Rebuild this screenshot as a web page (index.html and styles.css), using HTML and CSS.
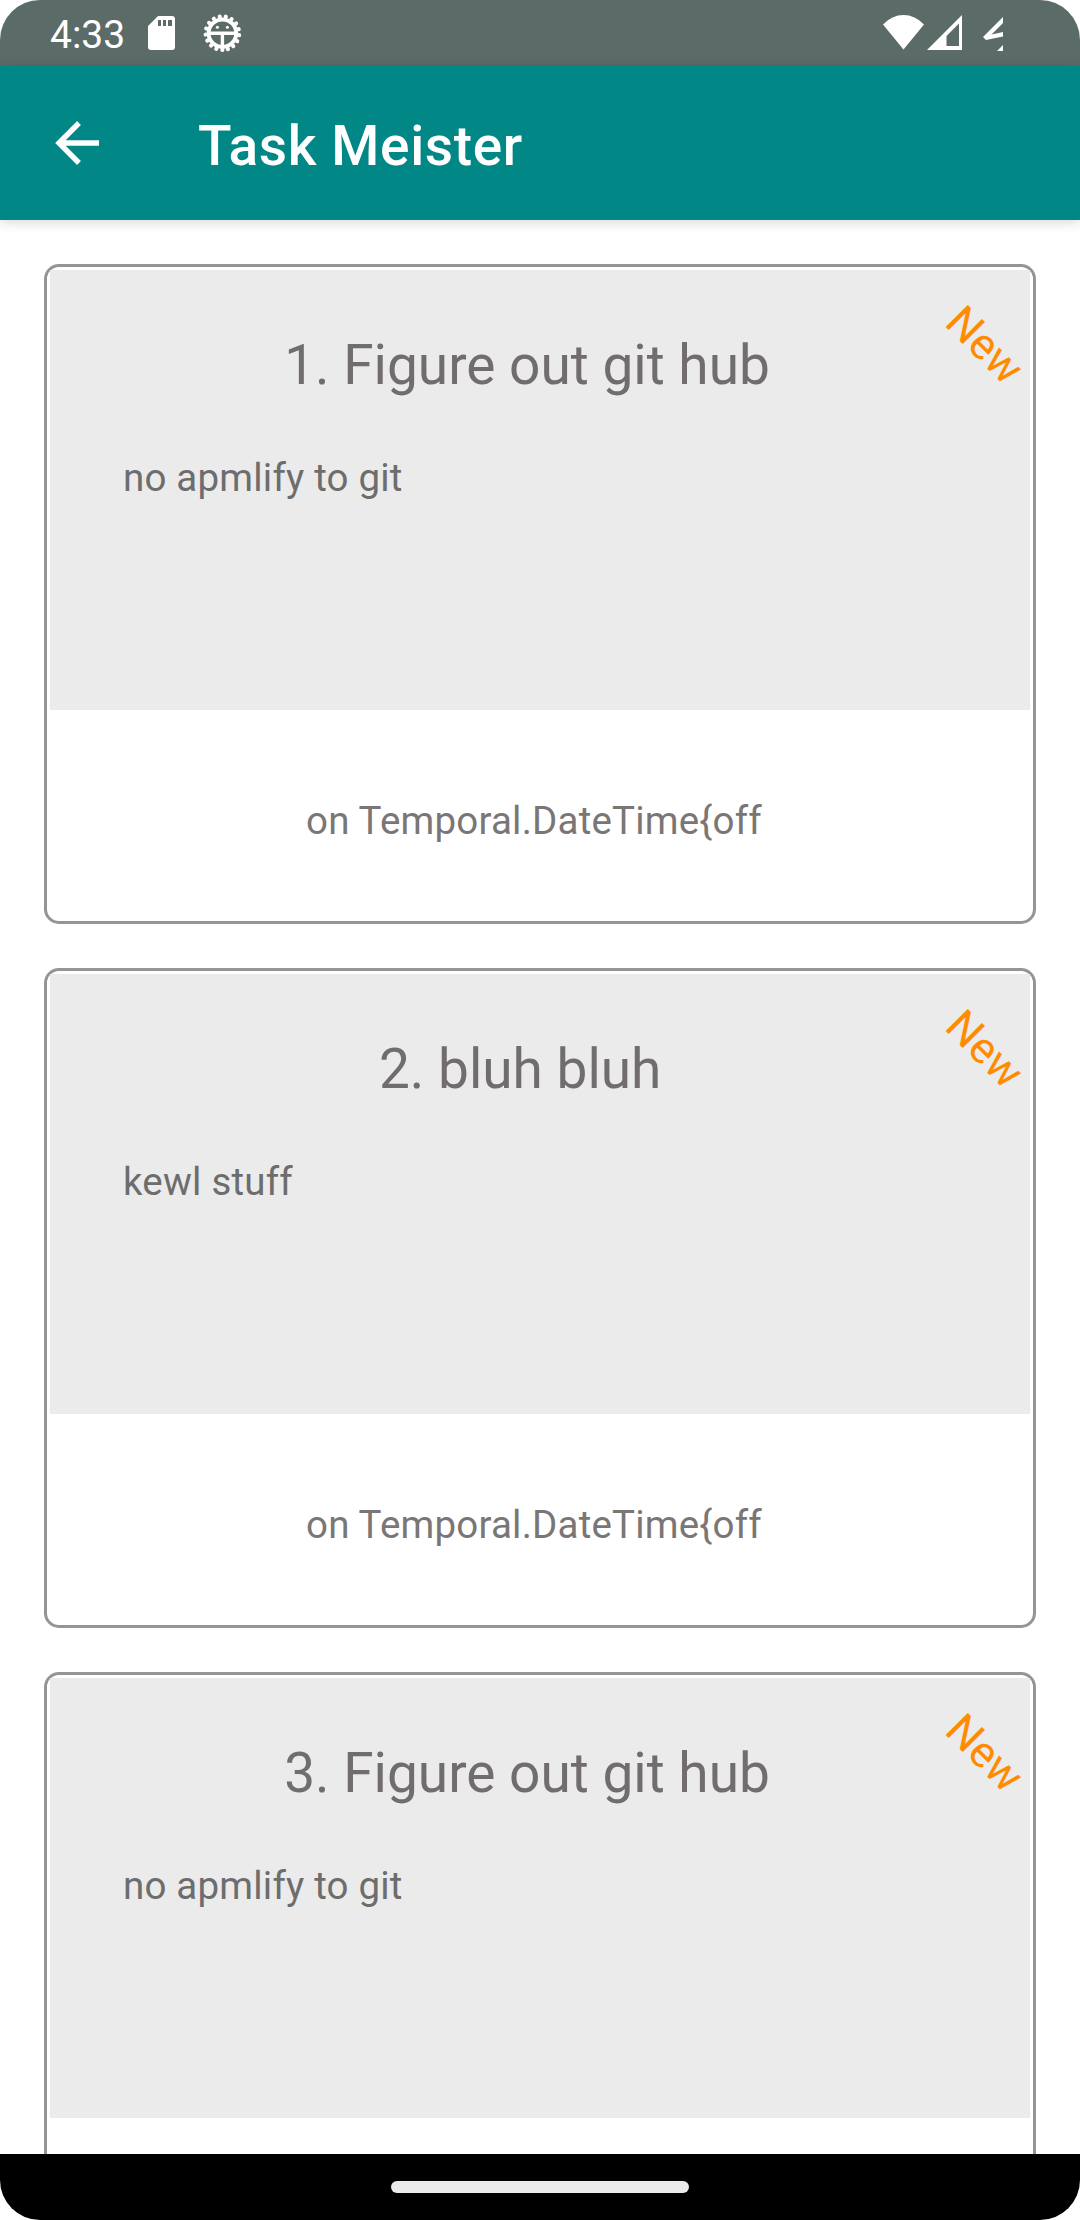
FILE: index.html
```html
<!DOCTYPE html>
<html lang="en">
<head>
<meta charset="utf-8">
<title>Task Meister</title>
<link rel="stylesheet" href="styles.css">
</head>
<body>
<div class="screen">
  <header class="status-bar">
    <span class="clock">4:33</span>
    <svg class="sd-icon" width="27" height="34" viewBox="0 0 27 34"><path fill="#fff" fill-rule="evenodd" d="M10 0H24Q27 0 27 3V31Q27 34 24 34H3Q0 34 0 31V10ZM10 4V10H13V4ZM15 4V10H18V4ZM20 4V10H24V4Z"/></svg>
    <svg class="bug-icon" width="40" height="40" viewBox="-20.400 -20.200 40 40" fill="none" stroke="#fff">
      <circle r="13.800" stroke-width="4"/>
      <circle r="16.800" stroke-width="4.200" stroke-linecap="round" stroke-dasharray="0.010 6.199" transform="rotate(90)"/>
      <path d="M-14 0H14M0 0V14" stroke-width="3.400"/>
      <g fill="#fff" stroke="none"><circle cx="-5" cy="-6" r="1.500"/><circle cx="5" cy="-6" r="1.500"/></g>
    </svg>
    <svg class="signal-icons" width="121" height="36" viewBox="0 0 121 36" fill="#fff">
      <path d="M0 9.5Q9 0 20.5 0T41 9.5L20.5 34.5Z"/>
      <path fill-rule="evenodd" d="M79 0V35H44ZM76 8.5L63.500 21V31H76Z"/>
      <path d="M120 2V8L108.500 19.500L120 17V21.500L103 25L100 22ZM120 30V36H114Z"/>
    </svg>
  </header>
  <nav class="app-bar">
    <svg class="back-icon" width="44" height="44" viewBox="0 0 44 44"><path fill="none" stroke="#fff" stroke-width="5.400" d="M44 22H4M24 2L4 22L24 42"/></svg>
    <h1 class="app-title">Task Meister</h1>
  </nav>
  <main class="task-list">
    <article class="card">
      <div class="card-main">
        <h2 class="card-title">1. Figure out git hub</h2>
        <p class="card-body">no apmlify to git</p>
        <span class="badge">New</span>
      </div>
      <p class="card-date">on Temporal.DateTime{off</p>
    </article>
    <article class="card">
      <div class="card-main">
        <h2 class="card-title">2. bluh bluh </h2>
        <p class="card-body">kewl stuff</p>
        <span class="badge">New</span>
      </div>
      <p class="card-date">on Temporal.DateTime{off</p>
    </article>
    <article class="card">
      <div class="card-main">
        <h2 class="card-title">3. Figure out git hub</h2>
        <p class="card-body">no apmlify to git</p>
        <span class="badge">New</span>
      </div>
    </article>
  </main>
  <footer class="gesture-bar"><div class="handle"></div></footer>
</div>
</body>
</html>
```
FILE: styles.css
```css
* { box-sizing: border-box; }
body { margin: 0; background: #fff; font-family: Roboto, sans-serif; }
h1, h2, p { margin: 0; font-weight: 400; }
svg { display: block; flex: none; }

.screen {
  display: flex;
  flex-direction: column;
  width: 1080px;
  height: 2220px;
  overflow: hidden;
  border-radius: 40px;
  background: #fff;
}

.status-bar {
  display: flex;
  align-items: flex-start;
  flex: none;
  height: 66px;
  padding-left: 50px;
  background: #5b6b67;
  color: #fff;
}
.clock { width: 98px; padding-top: 12px; font-size: 39px; line-height: 46px; }
.sd-icon { margin-top: 16px; }
.bug-icon { margin: 13px 0 0 27px; }
.signal-icons { margin: 15px 76px 0 auto; }

.app-bar {
  display: flex;
  align-items: center;
  flex: none;
  height: 154px;
  padding-left: 55px;
  background: #018786;
  color: #fff;
  box-shadow: 0 2px 12px rgba(0, 0, 0, 0.16);
  z-index: 1;
}
.app-title {
  padding: 6px 0 0 99px;
  font-size: 55px;
  font-weight: 500;
  line-height: 64px;
  letter-spacing: 0.62px;
}

.task-list {
  display: flex;
  flex-direction: column;
  gap: 44px;
  flex: 1;
  min-height: 0;
  padding: 44px 44px 0;
  overflow: hidden;
}
.card {
  flex: none;
  height: 660px;
  padding: 3px;
  border: 3px solid #959595;
  border-radius: 15px;
}
.card-main {
  position: relative;
  height: 440px;
  padding: 63px 0 0 73px;
  background: #ebebeb;
}
.card-title {
  width: 808px;
  font-size: 55px;
  line-height: 64px;
  text-align: center;
  white-space: pre;
  color: #716d6d;
}
.card-body {
  padding-top: 58px;
  font-size: 38.5px;
  line-height: 46px;
  letter-spacing: 0.2px;
  color: #6d6d6d;
}
.card-date {
  padding: 88px 0 0 256px;
  font-size: 38.5px;
  line-height: 46px;
  letter-spacing: 0.2px;
  color: #7b7676;
}
.badge {
  position: absolute;
  top: 49px;
  right: 0;
  width: 90px;
  font-size: 44px;
  line-height: 52px;
  text-align: center;
  color: #ff8c00;
  transform: rotate(45deg);
}

.gesture-bar {
  display: flex;
  justify-content: center;
  flex: none;
  height: 66px;
  padding-top: 27px;
  background: #000;
}
.handle { width: 298px; height: 12px; border-radius: 6px; background: #ebebeb; }
```
